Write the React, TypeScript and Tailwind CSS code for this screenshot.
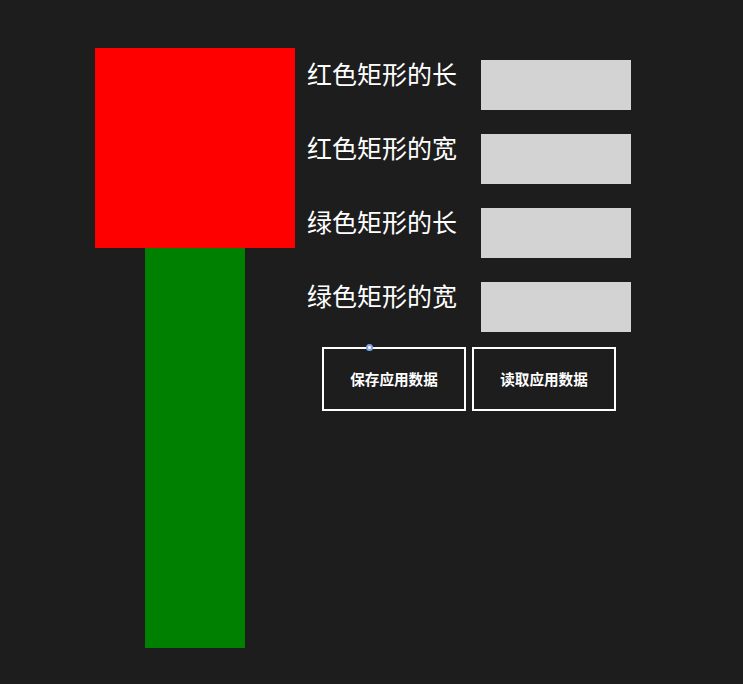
const rows = ['红色矩形的长', '红色矩形的宽', '绿色矩形的长', '绿色矩形的宽'];

export default function App() {
  return (
    <div
      className="w-[743px] h-[684px] bg-[#1d1d1d] text-white pt-[48px] pl-[95px] flex"
      style={{ fontFamily: '"Noto Sans CJK SC", "Microsoft YaHei", sans-serif' }}
    >
      <div className="flex flex-col">
        <div className="w-[200px] h-[200px] bg-[#ff0000]" />
        <div className="w-[100px] h-[400px] bg-[#008000] ml-[50px]" />
      </div>

      <div className="ml-[12px] mt-[12px] flex flex-col">
        <div className="flex flex-col gap-[24px]">
          {rows.map((label) => (
            <div key={label} className="flex items-start">
              <div className="w-[174px] text-[25px] leading-[25px] pt-[1px]">{label}</div>
              <div className="w-[150px] h-[50px] bg-[#d3d3d3]" />
            </div>
          ))}
        </div>

        <div className="flex gap-[6px] mt-[15px] ml-[15px] relative">
          <button className="w-[144px] h-[64px] border-2 border-white text-[14.6px] font-bold flex items-center justify-center">
            保存应用数据
          </button>
          <button className="w-[144px] h-[64px] border-2 border-white text-[14.6px] font-bold flex items-center justify-center">
            读取应用数据
          </button>
          <div className="absolute left-[44px] top-[-3px] w-[7px] h-[7px] rounded-full bg-white border-2 border-[#7fa6e8]" />
        </div>
      </div>
    </div>
  );
}
